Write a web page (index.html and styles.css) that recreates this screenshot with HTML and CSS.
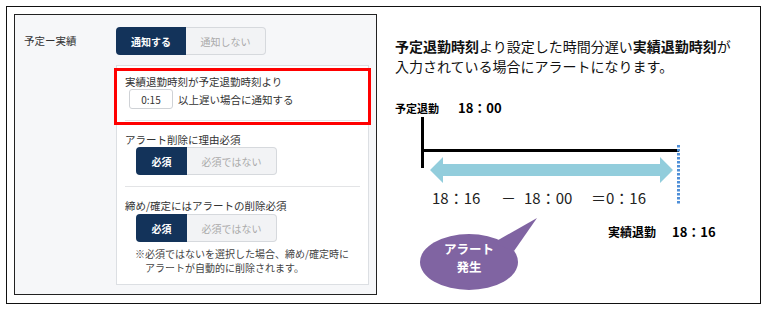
FILE: index.html
```html
<!DOCTYPE html>
<html lang="ja">
<head>
<meta charset="utf-8" />
<title>予定ー実績 アラート設定</title>
<link rel="stylesheet" href="styles.css">
</head>
<body>
<div class="frame">
  <div class="settings">
    <div class="label">予定ー実績</div>
    <div class="content">
      <div class="toggle t-notify">
        <span class="on">通知する</span><span class="off">通知しない</span>
      </div>
      <div class="card">
        <div class="sec">
          <div class="sec-title">実績退勤時刻が予定退勤時刻より</div>
          <div class="late-row">
            <span class="time-input">0:15</span>
            <span class="late-text">以上遅い場合に通知する</span>
          </div>
        </div>
        <div class="sec">
          <div class="sec-title">アラート削除に理由必須</div>
          <div class="toggle t-req">
            <span class="on">必須</span><span class="off">必須ではない</span>
          </div>
        </div>
        <div class="sec sec-last">
          <div class="sec-title">締め/確定にはアラートの削除必須</div>
          <div class="toggle t-req">
            <span class="on">必須</span><span class="off">必須ではない</span>
          </div>
          <p class="note">※必須ではないを選択した場合、締め/確定時に<br>アラートが自動的に削除されます。</p>
        </div>
      </div>
    </div>
  </div>

  <div class="explain">
    <p class="lead"><b>予定退勤時刻</b>より設定した時間分遅い<b>実績退勤時刻</b>が<br>入力されている場合にアラートになります。</p>
    <div class="diagram">
      <svg class="lines" width="365" height="200" viewBox="0 0 365 200">
        <rect x="26" y="19" width="3" height="51" fill="#000"/>
        <rect x="29" y="51" width="255" height="3" fill="#000"/>
        <line x1="283.5" y1="47" x2="283.5" y2="107" stroke="#4f8fd8" stroke-width="3" stroke-dasharray="2.5 1.5"/>
        <polygon points="35,72 48,59 48,66 265,66 265,59 278,72 265,85 265,78 48,78 48,85" fill="#92cddc"/>
        <ellipse cx="74" cy="164" rx="49" ry="28" fill="#8064a2"/>
        <polygon points="98,145 119,153 142,120" fill="#8064a2"/>
      </svg>
      <div class="mark plan"><span class="mk-name">予定退勤</span><span class="mk-time">18：00</span></div>
      <div class="mark actual"><span class="mk-name">実績退勤</span><span class="mk-time">18：16</span></div>
      <span class="calc c1">18：16</span>
      <span class="calc c2">－</span>
      <span class="calc c3">18：00</span>
      <span class="calc c4">＝0：16</span>
      <div class="bubble-text">アラート<br>発生</div>
    </div>
  </div>
</div>
</body>
</html>
```

FILE: styles.css
```css
* { margin:0; padding:0; }
body { background:#fff; font-family:"Noto Sans CJK JP", "Noto Sans", sans-serif; color:#333; }

.frame { margin:6px 0 0 6px; width:755px; height:298px; box-sizing:border-box; border:1px solid #111; padding:7px; display:flex; }

/* left : settings panel */
.settings { flex:0 0 363px; width:363px; height:281px; box-sizing:border-box; border:1px solid #222; background:#f6f7f9; padding:12px 0 0 9px; display:flex; }
.label { width:92px; line-height:28px; font-size:10.5px; color:#333; }
.content { width:253px; }

.toggle { display:flex; height:28px; font-size:10px; }
.toggle span { display:flex; align-items:center; justify-content:center; box-sizing:border-box; }
.toggle .on { background:#13335a; color:#fff; font-weight:bold; border-radius:4px 0 0 4px; }
.toggle .off { background:#f2f3f5; color:#aaa; border:1px solid #d6d9dd; border-left:0; border-radius:0 4px 4px 0; }
.t-notify .on { width:70px; }
.t-notify .off { width:80px; }
.t-req { margin-left:11px; }
.t-req .on { width:51px; }
.t-req .off { width:90px; }

.card { position:relative; margin-top:10px; background:#fff; border:1px solid #dcdfe3; }
.card::after { content:""; position:absolute; left:-3px; top:2px; width:257px; height:57px; box-sizing:border-box; border:3px solid #f00; }

.sec { margin:0 8px; padding:11px 0 11px; }
.sec:first-child { padding-top:8px; }
.sec + .sec { border-top:1px solid #e3e4e6; }
.sec-last { padding-bottom:9px; }
.sec-title { font-size:10.5px; line-height:15px; color:#333; white-space:nowrap; }
.sec-last .toggle { margin-top:1px; }

.late-row { display:flex; align-items:center; height:20px; }
.time-input { display:flex; align-items:center; justify-content:center; width:44px; height:20px; box-sizing:border-box; margin-left:4px; border:1px solid #cfd2d6; border-radius:3px; font-size:10px; color:#333; background:#fff; }
.late-text { margin-left:5px; font-size:10.5px; color:#333; }

.note { margin:5px 0 0 20px; text-indent:-10px; font-size:10px; line-height:14px; color:#444; white-space:nowrap; }

/* right : explanation */
.explain { flex:1; min-width:0; padding:22px 0 0 18px; color:#111; }
.lead { font-size:14px; line-height:20px; white-space:nowrap; }
.lead b { font-weight:bold; }

.diagram { position:relative; width:365px; height:200px; margin-top:22px; }
.lines { position:absolute; left:0; top:0; }
.mark { position:absolute; display:flex; align-items:baseline; font-weight:bold; color:#000; white-space:nowrap; line-height:16px; }
.mk-name { font-size:11px; }
.mk-time { font-size:13px; }
.plan { left:0; top:2px; }
.plan .mk-time { margin-left:19px; }
.actual { left:213px; top:126px; }
.actual .mk-name { font-size:12px; }
.actual .mk-time { margin-left:16px; }

.calc { position:absolute; top:91px; font-size:15px; line-height:18px; color:#222; white-space:nowrap; }
.c1 { left:37px; }
.c2 { left:106px; }
.c3 { left:129px; }
.c4 { left:196px; }

.bubble-text { position:absolute; left:34px; top:142px; width:80px; text-align:center; font-size:12.5px; line-height:18px; font-weight:bold; color:#fff; }
```
